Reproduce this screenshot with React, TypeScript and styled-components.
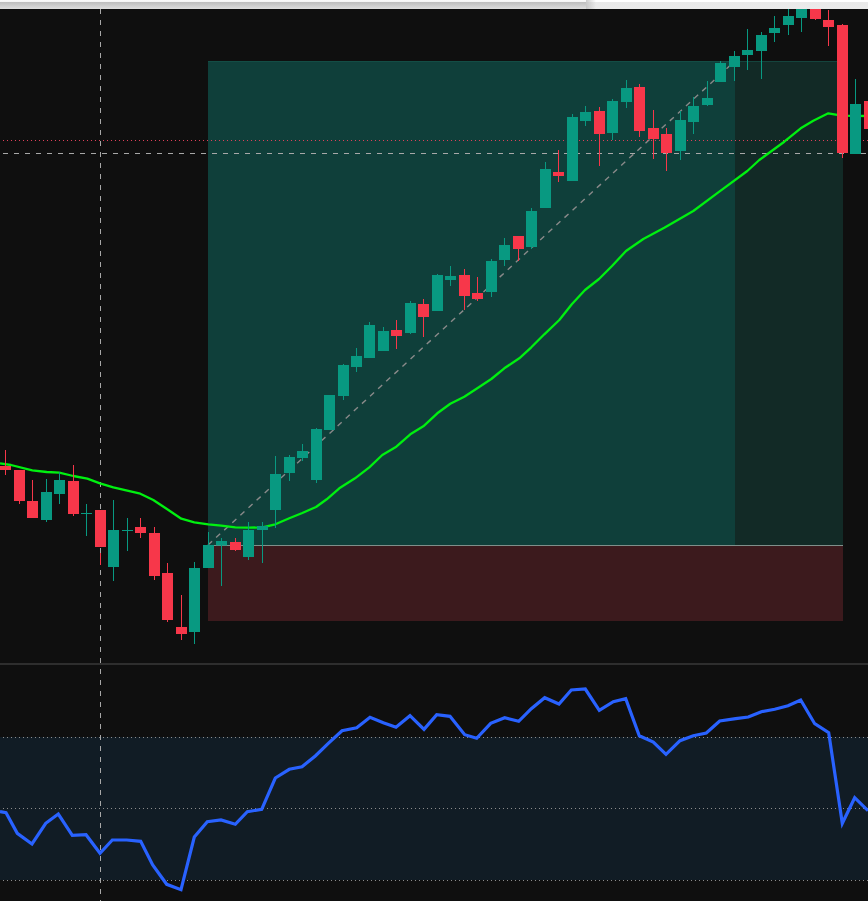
import React from "react";
import styled, { createGlobalStyle } from "styled-components";

const GlobalStyle = createGlobalStyle`
  html, body { margin: 0; padding: 0; background: #0f0f0f; }
  body { font-family: "Liberation Sans", Arial, sans-serif; overflow: hidden; }
`;

const Page = styled.div`
  width: 868px;
  height: 901px;
  display: flex;
  flex-direction: column;
  background: #0f0f0f;
  overflow: hidden;
`;

const BrowserEdge = styled.div`
  position: relative;
  flex: 0 0 9px;
  background: linear-gradient(to bottom, #ffffff 0, #ffffff 2px, #e9e9e9 2px, #ebebeb 100%);
  overflow: hidden;
`;

const FloatingShadow = styled.div`
  position: absolute;
  left: 0;
  top: 0;
  width: 586px;
  height: 9px;
  background: linear-gradient(to bottom, #fafafa 0, #f4f4f4 2px, #bdbdbd 2px, #dedede 100%);
  &::after {
    content: "";
    position: absolute;
    left: 100%;
    top: 0;
    width: 10px;
    height: 9px;
    background: linear-gradient(to right, rgba(190, 190, 190, 0.8), rgba(233, 233, 233, 0));
  }
`;

const PricePane = styled.svg`
  display: block;
  flex: 0 0 654px;
  width: 868px;
  height: 654px;
`;

const PaneDivider = styled.div`
  flex: 0 0 2px;
  background: #2e2e2e;
`;

const OscillatorPane = styled.svg`
  display: block;
  flex: 1 1 auto;
  width: 868px;
  height: 236px;
`;

type Candle = [number, number, number, number, number];
// x centre, wick top, body top, body bottom, wick bottom
const UP: Candle[] = [
  [46.5, 479, 492, 520, 522],
  [59.5, 472, 480, 494, 504],
  [86.5, 504, 513, 514, 536],
  [113.5, 500, 530, 567, 581],
  [127.5, 518, 530, 531, 551],
  [194.5, 562, 568, 632, 644],
  [208.5, 532, 545, 568, 568],
  [221.5, 538, 541, 545.5, 586],
  [248.5, 522, 530, 557, 560],
  [262.5, 522, 526, 530, 563],
  [275.5, 456, 474, 510, 528],
  [289.5, 455, 457, 473, 481],
  [302.5, 444, 451, 458, 461],
  [316.5, 428, 429, 480, 483],
  [329.5, 395, 395, 430, 430],
  [343.5, 364, 365, 396, 400],
  [356.5, 348, 356, 367, 372],
  [369.5, 322, 325, 358, 358],
  [383.5, 327, 331, 351, 351],
  [410.5, 301, 303, 333, 334],
  [437.5, 274, 275, 311, 311],
  [450.5, 266, 276, 280, 286],
  [491.5, 259, 261, 292, 297],
  [504.5, 238, 245, 260, 266],
  [531.5, 208, 211, 247, 249],
  [545.5, 162, 169, 208, 208],
  [572.5, 114, 117, 181, 181],
  [585.5, 106, 112, 121, 126],
  [612.5, 99, 101, 133, 140],
  [626.5, 80, 88, 102, 108],
  [680.5, 111, 120, 151, 160],
  [693.5, 97, 106, 122, 134],
  [707.5, 81, 98, 105, 106],
  [720.5, 61, 63, 82, 82],
  [734.5, 51, 56, 67, 81],
  [747.5, 29, 50, 55, 70],
  [761.5, 32, 35, 51, 79],
  [774.5, 16, 28, 33, 42],
  [788.5, 9, 16, 25, 35],
  [801.5, 9, 9, 18, 32],
  [855.5, 79, 104, 154, 154],
];
const DOWN: Candle[] = [
  [5.5, 450, 466, 470, 475],
  [19.5, 470, 470, 501, 504],
  [32.5, 480, 501, 518, 518],
  [73.5, 465, 481, 514, 516],
  [100.5, 553, 510, 547, 565],
  [140.5, 518, 527, 533, 538],
  [154.5, 527, 533, 576, 580],
  [167.5, 563, 573, 620, 622],
  [181.5, 595, 627, 634, 640],
  [235.5, 538, 542, 550, 551],
  [396.5, 320, 330, 336, 349],
  [423.5, 299, 304, 317, 337],
  [464.5, 269, 275, 296, 310],
  [477.5, 277, 293, 299, 301],
  [518.5, 236, 236, 249, 261],
  [558.5, 150, 172, 176, 182],
  [599.5, 107, 111, 134, 166],
  [639.5, 84, 87, 131, 137],
  [653.5, 110, 128, 139, 159],
  [666.5, 128, 134, 153, 171],
  [815.5, 9, 9, 19, 20],
  [828.5, 10, 20, 27, 46],
  [842.5, 24, 25, 153, 158],
  [869.5, 90, 101, 129, 135],
];

const MA: [number, number][] = [
  [0, 463.3], [11, 465], [32.3, 470.3], [46.7, 472], [59.3, 472.7], [73.3, 476], [87.3, 478.7],
  [100, 483.3], [113.3, 487.3], [127.3, 490.7], [140.3, 493.7], [153.3, 500], [167.3, 509.3],
  [181.3, 518.7], [194.3, 522.3], [208.3, 524.3], [221.3, 525.7], [235.3, 527.3], [248.3, 527.7],
  [262.3, 527.3], [275.3, 524.3], [289.3, 518.3], [302.3, 513], [316, 507], [326.7, 499.3],
  [339.3, 488.3], [355, 478.3], [369.3, 467.3], [382.3, 455], [396.3, 446.7], [410.3, 434.3],
  [423.3, 426.3], [437.3, 413.3], [450.3, 403.7], [464.3, 396.7], [477.3, 388.3], [491.3, 379],
  [504.3, 368.3], [519.3, 358.3], [531.3, 347.3], [544.3, 334.3], [559.3, 320], [572, 304],
  [585, 290], [599, 279], [612, 266], [626, 251], [643.3, 239], [664.3, 227.7], [693.3, 211],
  [719.3, 191.7], [747.3, 171], [759.3, 160], [784.3, 141.7], [800.7, 128.3], [813.3, 120.7],
  [828.3, 113.3], [841.7, 115.7], [868, 116],
];

const RSI: [number, number][] = [
  [0, 811.7], [6, 812.7], [17.3, 833.3], [32, 844], [45.7, 823.3], [58.3, 814], [72.3, 835.3],
  [86, 834.7], [100, 853.3], [112.3, 840], [126.7, 840], [140.7, 841.3], [152.7, 865],
  [166.7, 884.3], [181, 889.7], [194.3, 837], [207.3, 821.7], [221, 820], [235.3, 824.3],
  [247.3, 811.7], [261.7, 809.3], [275.3, 778], [289.3, 769.3], [302, 766.7], [315.3, 756],
  [328.3, 743.3], [342, 730.7], [356.7, 727.7], [370, 717.3], [383.3, 722.7], [396, 727.3],
  [410, 715.7], [424, 729.3], [436.7, 714.7], [450, 716.3], [464.7, 734.7], [476.7, 738.3],
  [490.7, 723.3], [504.7, 717.7], [518.7, 721.3], [531.3, 708.7], [544.7, 697.7], [559, 704],
  [571.3, 690], [585.3, 689], [599.3, 710.3], [613.3, 701.7], [625.7, 698.7], [639.3, 735.7],
  [653.3, 742], [666, 754.3], [680, 740.7], [693.3, 735.7], [706.3, 733], [719.7, 721],
  [735.7, 718.7], [748.3, 717], [761.3, 711.7], [774.7, 709.3], [788, 705.7], [800.7, 700],
  [814.7, 723.7], [828.7, 732.7], [842.3, 823.3], [854.7, 797.7], [868, 810.7],
];

const pts = (p: [number, number][]) => p.map(([x, y]) => `${x},${y}`).join(" ");

const Candles = ({ data, color }: { data: Candle[]; color: string }) => (
  <g fill={color} stroke="none">
    {data.map(([x, wt, bt, bb, wb]) => (
      <g key={x}>
        <rect x={x - 0.5} y={wt} width={1} height={wb - wt} />
        <rect x={x - 5.5} y={bt} width={11} height={bb - bt} />
      </g>
    ))}
  </g>
);

const GREEN = "#089981";
const RED = "#f7374a";
const CROSS = "#a8a8a8";

export default function App() {
  return (
    <>
      <GlobalStyle />
      <Page>
        <BrowserEdge>
          <FloatingShadow />
        </BrowserEdge>
        <PricePane viewBox="0 9 868 654">
          <rect x={208} y={61} width={527} height={484} fill="#0f3f3a" />
          <rect x={735} y={61} width={108} height={484} fill="#122a26" />
          <rect x={208} y={61} width={635} height={1} fill="#15564c" opacity={0.6} />
          <rect x={208} y={546} width={635} height={75} fill="#3c1a1d" />
          <rect x={208} y={545} width={635} height={1} fill="#7f8f8a" />
          <line x1={208} y1={545} x2={735} y2={61} stroke="#8a8a8a" strokeWidth={1.4} strokeDasharray="5.5 5.5" />
          <line x1={3} y1={140.5} x2={868} y2={140.5} stroke="#e0405a" strokeWidth={1} strokeDasharray="1 3" />
          <line x1={3} y1={153.5} x2={868} y2={153.5} stroke={CROSS} strokeWidth={1} strokeDasharray="5 6" />
          <line x1={100.5} y1={9} x2={100.5} y2={663} stroke={CROSS} strokeWidth={1} strokeDasharray="5 6" />
          <polyline points={pts(MA)} fill="none" stroke="#00f010" strokeWidth={2.3} strokeLinejoin="round" />
          <Candles data={UP} color={GREEN} />
          <Candles data={DOWN} color={RED} />
        </PricePane>
        <PaneDivider />
        <OscillatorPane viewBox="0 665 868 236">
          <rect x={0} y={737} width={868} height={143} fill="#111c25" />
          <line x1={3} y1={737.5} x2={868} y2={737.5} stroke="#8c8c8c" strokeDasharray="1 3" />
          <line x1={3} y1={808.5} x2={868} y2={808.5} stroke="#8c8c8c" strokeDasharray="1 3" />
          <line x1={3} y1={880.5} x2={868} y2={880.5} stroke="#8c8c8c" strokeDasharray="1 3" />
          <line x1={100.5} y1={665} x2={100.5} y2={901} stroke={CROSS} strokeWidth={1} strokeDasharray="5 6" strokeDashoffset={7} />
          <polyline points={pts(RSI)} fill="none" stroke="#2962ff" strokeWidth={3.2} strokeLinejoin="miter" />
        </OscillatorPane>
      </Page>
    </>
  );
}
